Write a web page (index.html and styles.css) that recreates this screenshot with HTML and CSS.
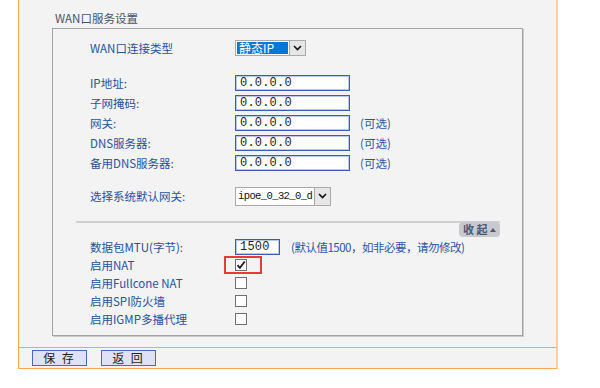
FILE: index.html
```html
<!DOCTYPE html>
<html lang="zh-CN">
<head>
  <meta charset="UTF-8">
  <title>WAN口服务设置</title>
  <link rel="stylesheet" href="styles.css">
</head>
<body>
  <div class="frame">
    <div class="title">WAN口服务设置</div>
    <div class="box">
      <div class="row row-wan">
        <span class="label">WAN口连接类型</span>
        <span class="select select-type">
          <span class="select-value">静态IP</span>
          <span class="select-arrow"><svg width="9" height="6" viewBox="0 0 9 6"><path d="M1 1l3.5 3.5L8 1" fill="none" stroke="#111" stroke-width="1.6"/></svg></span>
        </span>
      </div>

      <div class="ip-group">
        <div class="row row-ip">
          <span class="label">IP地址:</span>
          <span class="input">0.0.0.0</span>
        </div>
        <div class="row row-ip">
          <span class="label">子网掩码:</span>
          <span class="input">0.0.0.0</span>
        </div>
        <div class="row row-ip">
          <span class="label">网关:</span>
          <span class="input">0.0.0.0</span>
          <span class="hint">(可选)</span>
        </div>
        <div class="row row-ip">
          <span class="label">DNS服务器:</span>
          <span class="input">0.0.0.0</span>
          <span class="hint">(可选)</span>
        </div>
        <div class="row row-ip">
          <span class="label">备用DNS服务器:</span>
          <span class="input">0.0.0.0</span>
          <span class="hint">(可选)</span>
        </div>
      </div>

      <div class="row row-gw">
        <span class="label">选择系统默认网关:</span>
        <span class="select select-gw">
          <span class="select-value">ipoe_0_32_0_d</span>
          <span class="select-arrow"><svg width="9" height="6" viewBox="0 0 9 6"><path d="M1 1l3.5 3.5L8 1" fill="none" stroke="#111" stroke-width="1.6"/></svg></span>
        </span>
      </div>

      <div class="fold">
        <span class="fold-btn">收 起 <i class="up"></i></span>
      </div>

      <div class="row row-adv row-mtu">
        <span class="label">数据包MTU(字节):</span>
        <span class="input input-mtu">1500</span>
        <span class="hint hint-mtu">(默认值1500，如非必要，请勿修改)</span>
      </div>
      <div class="row row-adv">
        <span class="label">启用NAT</span>
        <span class="check-cell">
          <span class="check">
            <svg width="10" height="10" viewBox="0 0 10 10"><path d="M1.5 5.2l2.4 2.6L8.8 1.5" fill="none" stroke="#1a1a1a" stroke-width="1.8"/></svg>
          </span>
          <span class="mark"></span>
        </span>
      </div>
      <div class="row row-adv">
        <span class="label">启用Fullcone NAT</span>
        <span class="check"></span>
      </div>
      <div class="row row-adv">
        <span class="label">启用SPI防火墙</span>
        <span class="check"></span>
      </div>
      <div class="row row-adv">
        <span class="label">启用IGMP多播代理</span>
        <span class="check"></span>
      </div>
    </div>

    <div class="actions">
      <span class="btn">保 存</span>
      <span class="btn">返 回</span>
    </div>
  </div>
</body>
</html>
```

FILE: styles.css
```css
body {
  margin: 0;
  background: #fff;
  font-family: "Noto Sans CJK SC", "DejaVu Sans", sans-serif;
  font-size: 11.5px;
}
.frame {
  margin-left: 18px;
  width: 537px;
  background: #f3f3f3;
  border-left: 1px solid #ffa54f;
  border-right: 2px solid #ffcf9f;
  border-bottom: 1px solid #ffa54f;
}
.title {
  padding: 10px 0 0 36px;
  height: 16px;
  line-height: 16px;
  color: #45526b;
}
.box {
  margin: 2px 33px 0 33px;
  padding: 9px 0 7px 0;
  border: 1px solid #a3a3a3;
  box-shadow: 1px 1px 0 #cacaca;
}
.row {
  display: flex;
  align-items: center;
  padding-left: 37px;
  color: #27519f;
}
.label {
  width: 145px;
  flex-shrink: 0;
  line-height: 14px;
}
.row-wan {
  height: 20px;
}
.ip-group {
  margin-top: 15px;
}
.row-ip {
  height: 20px;
}
.row-gw {
  margin-top: 13px;
  height: 20px;
}
.row-adv {
  height: 18px;
}
.row-mtu {
  margin-top: 1px;
}
.input {
  width: 109px;
  height: 14px;
  padding-left: 4px;
  background: #fff;
  border: 1px solid #3d5cb7;
  box-shadow: inset 0 0 0 1px #b9c6ee;
  font-family: "Liberation Mono", monospace;
  font-size: 12px;
  line-height: 14px;
  color: #222;
  letter-spacing: 0.2px;
}
.input-mtu {
  width: 39px;
}
.hint {
  margin-left: 10px;
  color: #2b55a8;
}
.hint-mtu {
  margin-left: 11px;
  letter-spacing: -0.5px;
}
.select {
  display: flex;
  background: #fff;
  border: 1px solid #a9a9a9;
}
.select-type {
  width: 69px;
  height: 14px;
}
.select-type .select-value {
  flex: 1;
  margin: 1px;
  padding-left: 2px;
  background: #0078d7;
  color: #fff;
  font-size: 12px;
  line-height: 12px;
}
.select-gw {
  width: 94px;
  height: 17px;
}
.select-gw .select-value {
  flex: 1;
  white-space: nowrap;
  padding-left: 2px;
  font-family: "Liberation Mono", monospace;
  font-size: 10.5px;
  letter-spacing: -0.6px;
  line-height: 17px;
  color: #111;
}
.select-arrow {
  width: 15px;
  flex-shrink: 0;
  display: flex;
  align-items: center;
  justify-content: center;
  background: #e6e6e6;
  border-left: 1px solid #a9a9a9;
}
.fold {
  margin: 15px 22px 0 23px;
  border-top: 2px solid #d0d0d0;
  display: flex;
  justify-content: flex-end;
}
.fold-btn {
  margin-top: -1px;
  width: 41px;
  height: 15px;
  line-height: 15px;
  border-radius: 4px;
  background: #c7c9cd;
  color: #4a5878;
  text-align: center;
  font-weight: bold;
  font-size: 11px;
}
.up {
  display: inline-block;
  width: 0;
  height: 0;
  border-left: 3px solid transparent;
  border-right: 3px solid transparent;
  border-bottom: 4px solid #4a5878;
  vertical-align: 2px;
}
.check-cell {
  position: relative;
  display: flex;
}
.check {
  width: 10px;
  height: 10px;
  display: flex;
  align-items: center;
  justify-content: center;
  background: #fff;
  border: 1px solid #6f6f6f;
}
.mark {
  position: absolute;
  left: -11px;
  top: -3px;
  width: 34px;
  height: 14px;
  border: 2px solid #e63a3f;
}
.actions {
  margin-top: 11px;
  border-top: 1px solid #ffa54f;
  height: 20px;
  display: flex;
  align-items: center;
  gap: 14px;
  padding-left: 13px;
}
.btn {
  width: 53px;
  height: 14px;
  line-height: 14px;
  background: #dfe1f7;
  border: 1px solid #4866c4;
  text-align: center;
  color: #222;
  font-size: 12px;
  letter-spacing: 2px;
}
```
